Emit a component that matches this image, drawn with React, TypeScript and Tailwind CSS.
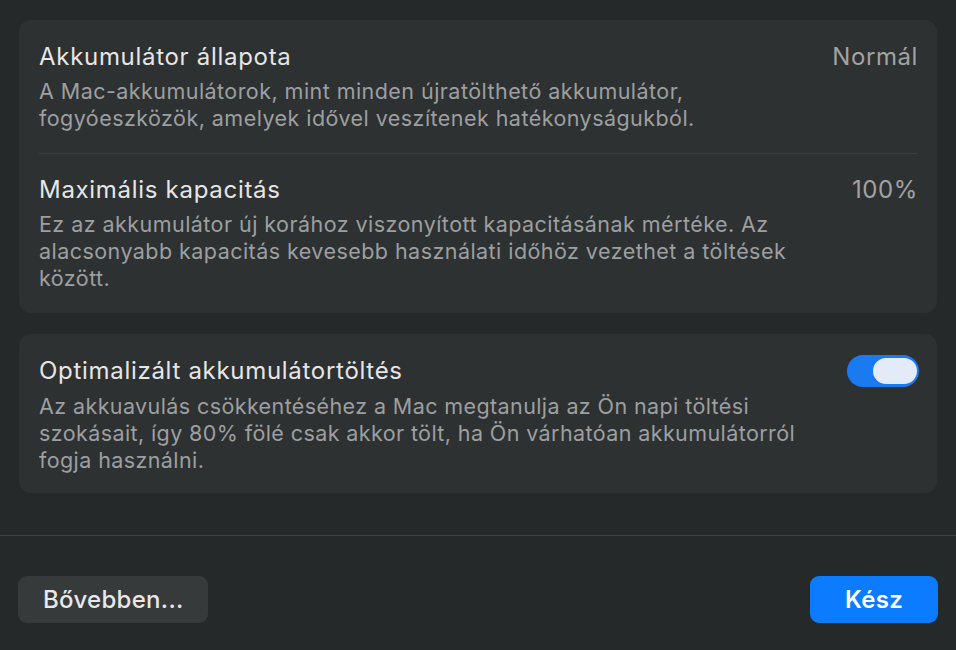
export default function App() {
  return (
    <div className="flex h-[650px] w-[956px] flex-col bg-[#25292a] font-['Inter',sans-serif] antialiased">
      <div className="flex flex-col gap-[21px] px-[19px] pt-[20px]">
        <div className="rounded-[12px] bg-[#2d3132] px-[20px] pr-[19px]">
          <div className="pt-[23px] pb-[21px]">
            <div className="flex items-center justify-between">
              <span className="text-[24px] leading-[28px] tracking-[0.7px] text-[#e6e6e6]">Akkumulátor állapota</span>
              <span className="text-[24px] leading-[28px] tracking-[0.6px] text-[#a1a3a4]">Normál</span>
            </div>
            <p className="mt-[7px] text-[21.5px] leading-[27px] tracking-[0.45px] text-[#9d9fa0]">
              A Mac-akkumulátorok, mint minden újratölthető akkumulátor,
              <br />
              fogyóeszközök, amelyek idővel veszítenek hatékonyságukból.
            </p>
          </div>
          <div className="border-t border-[#3b3f40] pt-[22px] pb-[21px]">
            <div className="flex items-center justify-between">
              <span className="text-[24px] leading-[28px] tracking-[0.7px] text-[#e6e6e6]">Maximális kapacitás</span>
              <span className="text-[24px] leading-[28px] tracking-[0.6px] text-[#a1a3a4]">100%</span>
            </div>
            <p className="mt-[7px] text-[21.5px] leading-[27px] tracking-[0.45px] text-[#9d9fa0]">
              Ez az akkumulátor új korához viszonyított kapacitásának mértéke. Az
              <br />
              alacsonyabb kapacitás kevesebb használati időhöz vezethet a töltések
              <br />
              között.
            </p>
          </div>
        </div>

        <div className="rounded-[12px] bg-[#2d3132] pl-[20px] pr-[18px] pt-[23px] pb-[19px]">
          <div className="flex h-[28px] items-center justify-between">
            <span className="text-[24px] leading-[28px] tracking-[0.7px] text-[#e6e6e6]">Optimalizált akkumulátortöltés</span>
            <div className="flex h-[32px] w-[72px] shrink-0 items-center justify-end rounded-full bg-[#1a7bf0] pr-[2px]">
              <div className="h-[26px] w-[44px] rounded-full bg-[#e3ebf8]" />
            </div>
          </div>
          <p className="mt-[8px] text-[21.5px] leading-[27px] tracking-[0.4px] text-[#9d9fa0]">
            Az akkuavulás csökkentéséhez a Mac megtanulja az Ön napi töltési
            <br />
            szokásait, így 80% fölé csak akkor tölt, ha Ön várhatóan akkumulátorról
            <br />
            fogja használni.
          </p>
        </div>
      </div>

      <div className="flex-1" />

      <div className="flex items-center justify-between border-t border-[#3c4041] px-[18px] pt-[40px] pb-[27px]">
        <button className="flex h-[47px] w-[190px] items-center rounded-[9px] bg-[#363a3b] pl-[25px] text-[24px] font-medium tracking-[0.3px] text-[#e8e8e8]">
          Bővebben...
        </button>
        <button className="flex h-[47px] w-[128px] items-center justify-center rounded-[9px] bg-[#0b7cff] text-[24px] font-semibold tracking-[0.3px] text-white">
          Kész
        </button>
      </div>
    </div>
  );
}
